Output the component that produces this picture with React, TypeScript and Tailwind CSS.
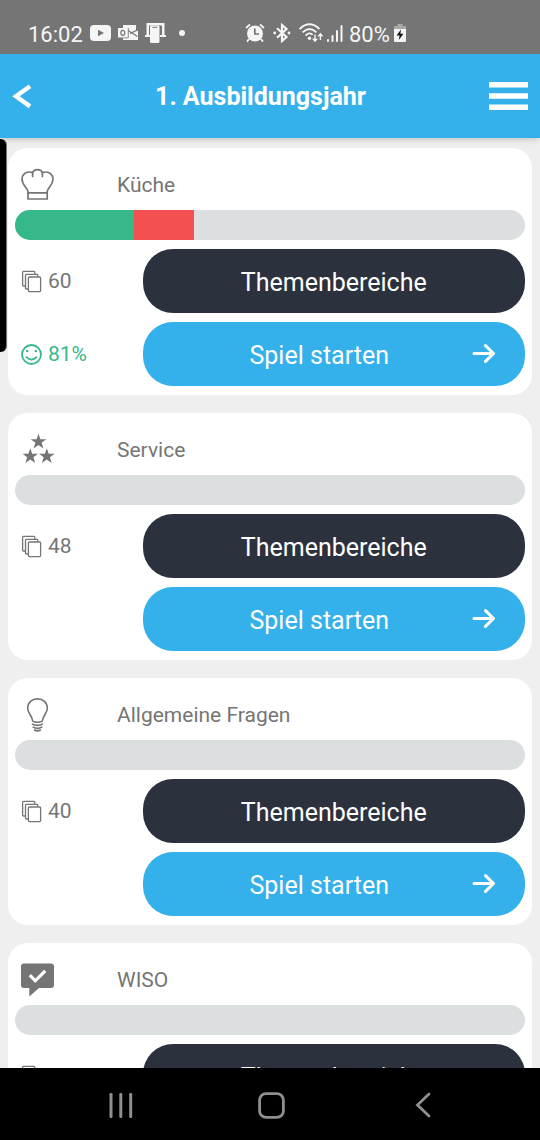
import type { ReactNode } from "react";

type Topic = {
  name: string;
  icon: ReactNode;
  cards?: number;
  right?: number;
  wrong?: number;
  score?: string;
};

const STAR = "M0 -8 L1.9 -2.5 H7.8 L3.1 1 L4.9 6.8 L0 3.3 L-4.9 6.8 L-3.1 1 L-7.8 -2.5 H-1.9 Z";

function ChefHatIcon() {
  return (
    <svg width="34" height="34" viewBox="0 0 34 34" fill="none" stroke="currentColor" strokeWidth="1.7" strokeLinejoin="round" strokeLinecap="round" aria-hidden="true">
      <path d="M7 31 V23.5 C6.4 19.4 1 17.6 1 11 C1 6.6 4.6 4 8.2 4 C9.6 4 10.6 4.2 11.6 4.8 C12.2 2.8 13.8 1.6 16.5 1.6 C19.2 1.6 20.8 2.8 21.4 4.8 C22.4 4.2 23.4 4 24.8 4 C28.6 4 32 6.6 32 11 C32 17.6 26.8 19.4 26.2 23.5 V31 Z" />
      <path d="M7 24.8 H26.2 M11.6 4.8 V8.4 M21.4 4.8 V8.4" />
    </svg>
  );
}

function StarsIcon() {
  return (
    <svg width="34" height="34" viewBox="0 0 34 34" fill="currentColor" aria-hidden="true">
      <path d={STAR} transform="translate(17.5 8.7)" />
      <path d={STAR} transform="translate(9.3 23.2)" />
      <path d={STAR} transform="translate(25.8 23.2)" />
    </svg>
  );
}

function BulbIcon() {
  return (
    <svg width="34" height="34" viewBox="0 0 34 34" fill="none" stroke="currentColor" strokeWidth="1.6" strokeLinecap="round" strokeLinejoin="round" aria-hidden="true">
      <path d="M11.5 22.3 C11 17.5 6.7 15.5 6.7 10.3 C6.7 4.5 11 .9 16.5 .9 C22 .9 26.3 4.5 26.3 10.3 C26.3 15.5 22 17.5 21.5 22.3 C21.5 23.8 20.5 24.2 16.5 24.2 C12.5 24.2 11.5 23.8 11.5 22.3 Z" />
      <path d="M11.5 26.2 C14 27.8 19 27.8 21.5 26.2 M12.2 29.1 C14.6 30.5 18.4 30.5 20.8 29.1 M13.6 32 C15.3 33 17.7 33 19.4 32" />
    </svg>
  );
}

function ChatCheckIcon() {
  return (
    <svg width="34" height="34" viewBox="0 0 34 34" aria-hidden="true">
      <path fill="currentColor" d="M3 .5 H30 Q33 .5 33 3.5 V22 Q33 25 30 25 H18 L8.3 33.5 V25 H3 Q0 25 0 22 V3.5 Q0 .5 3 .5 Z" />
      <path fill="none" stroke="#fff" strokeWidth="3.2" d="M8.8 12.2 L14.3 17.8 L24.2 7.8" />
    </svg>
  );
}

function CardsIcon() {
  return (
    <svg width="21" height="23" viewBox="0 0 21 23" fill="none" stroke="currentColor" strokeWidth="1.3" aria-hidden="true">
      <rect x="7.4" y="7" width="12.2" height="14.6" rx="1" />
      <path d="M7.2 19 H5.4 Q4.5 19 4.5 18.2 V5.2 Q4.5 4.3 5.4 4.3 H15.8 Q16.7 4.3 16.7 5.1 V6.8" />
      <path d="M4.4 16 H2.5 Q1.6 16 1.6 15.2 V2.2 Q1.6 1.3 2.5 1.3 H12.9 Q13.8 1.3 13.8 2.2 V4.1" />
    </svg>
  );
}

function SmileyIcon() {
  return (
    <svg width="21" height="21" viewBox="0 0 21 21" fill="none" stroke="currentColor" strokeWidth="1.8" aria-hidden="true">
      <circle cx="10.5" cy="10.5" r="9.5" />
      <path d="M5.4 13.2 Q10.5 18 15.6 13.2" strokeLinecap="round" />
      <circle cx="6.2" cy="7" r="1.3" fill="currentColor" stroke="none" />
      <circle cx="14.8" cy="7" r="1.3" fill="currentColor" stroke="none" />
    </svg>
  );
}

const topics: Topic[] = [
  { name: "Küche", icon: <ChefHatIcon />, cards: 60, right: 14, wrong: 7, score: "81%" },
  { name: "Service", icon: <StarsIcon />, cards: 48 },
  { name: "Allgemeine Fragen", icon: <BulbIcon />, cards: 40 },
  { name: "WISO", icon: <ChatCheckIcon /> },
];

function StatusBar() {
  return (
    <div className="flex h-[54px] shrink-0 items-center bg-[#757575] pt-3 pl-7 text-[22px] text-[#f5f5f5]">
      <div className="flex w-[217px] shrink-0 items-center gap-[7px]">
        <span className="pt-0.5">16:02</span>
        <svg width="21" height="16" viewBox="0 0 21 16" aria-hidden="true">
          <rect width="21" height="16" rx="4" fill="currentColor" />
          <path d="M8 4.8 L14 8 L8 11.2 Z" fill="#757575" />
        </svg>
        <svg width="20" height="16" viewBox="0 0 20 16" aria-hidden="true">
          <path fill="currentColor" d="M5 0 H18 V5 L12 8 L20 4.8 V15 H5 Z" />
          <path d="M10 5.5 L19.5 11.5 M12 8.5 L20 5" fill="none" stroke="#757575" strokeWidth="1.1" />
          <rect y="3" width="10" height="9.5" fill="currentColor" />
          <ellipse cx="4.8" cy="7.8" rx="2" ry="2.5" fill="none" stroke="#757575" strokeWidth="1.2" />
          <path d="M10.3 3 V12.8 H5" fill="none" stroke="#757575" strokeWidth=".8" />
        </svg>
        <svg width="21" height="20" viewBox="0 0 21 20" aria-hidden="true">
          <path fill="currentColor" d="M1.5 0 H19.5 V12 H21 V14 H15 V12 H17 V2.5 H4 V12 H5 V14 H0 V12 H1.5 Z" />
          <rect x="5" y="2.5" width="9.5" height="17.5" rx="1.5" fill="currentColor" />
          <path d="M7.3 4.3 H12.2" stroke="#757575" />
        </svg>
        <svg className="ml-1.5" width="6" height="6" viewBox="0 0 6 6" aria-hidden="true">
          <circle cx="3" cy="3" r="3" fill="currentColor" />
        </svg>
      </div>
      <div className="flex items-center">
        <svg width="20" height="20" viewBox="0 0 20 20" aria-hidden="true">
          <circle cx="10" cy="10.5" r="8" fill="currentColor" />
          <path d="M1 5 L5 1.4 M19 5 L15 1.4 M4 16 L2 18.6 M16 16 L18 18.6" stroke="currentColor" strokeWidth="1.8" />
          <path d="M9.8 5.5 V11 H14" fill="none" stroke="#757575" strokeWidth="1.7" />
        </svg>
        <svg className="ml-2" width="18" height="20" viewBox="0 0 18 20" fill="none" stroke="currentColor" strokeWidth="2.2" aria-hidden="true">
          <path d="M4 5.3 L13.5 14 L9 18 V2 L13.5 6 L4 14.7" />
          <circle cx="1.7" cy="10" r="1.4" fill="currentColor" stroke="none" />
          <circle cx="16" cy="10" r="1.4" fill="currentColor" stroke="none" />
        </svg>
        <svg className="ml-2" width="24" height="20" viewBox="0 0 24 20" fill="none" stroke="currentColor" strokeWidth="1.8" aria-hidden="true">
          <path d="M.6 6 Q10.5 -3.6 20.4 6 M3.6 9.4 Q10.5 2.6 17.4 9.4 M6.6 12.6 Q10.5 8.6 13.6 11.8" />
          <circle cx="10.5" cy="15.3" r="1.7" fill="currentColor" stroke="none" />
          <path d="M16 11.5 V18 M13.8 15.6 L16 18.2 L18.2 15.6 M21.4 17 V11 M19.2 13.4 L21.4 10.8 L23.6 13.4" strokeWidth="1.4" />
        </svg>
        <svg className="ml-1" width="16" height="17" viewBox="0 0 16 17" fill="currentColor" aria-hidden="true">
          <rect y="14" width="2" height="3" rx="1" />
          <rect x="4.5" y="10" width="2" height="7" rx="1" />
          <rect x="9" y="5" width="2" height="12" rx="1" />
          <rect x="13.5" width="2" height="17" rx="1" />
        </svg>
        <span className="ml-1.5 pt-0.5">80%</span>
        <svg className="ml-1" width="12" height="18" viewBox="0 0 12 18" aria-hidden="true">
          <path d="M3.5 0 H8.5 V2 H12 V5 H0 V2 H3.5 Z" fill="#a9a9a9" />
          <path d="M0 5 H12 V17 Q12 18 11 18 H1 Q0 18 0 17 Z" fill="currentColor" />
          <path d="M7 5.5 L2.6 11.5 H5.6 L4.8 16 L9.4 9.8 H6.4 Z" fill="#111" />
        </svg>
      </div>
    </div>
  );
}

function Header() {
  return (
    <header className="relative z-10 flex h-[84px] shrink-0 items-center bg-[#34b0ea] px-3 text-white shadow-md">
      <button type="button" aria-label="Zurück">
        <svg width="20" height="25" viewBox="0 0 20 25" fill="none" stroke="currentColor" strokeWidth="4.4" aria-hidden="true">
          <path d="M18 2.2 L4 12.3 L18 22.4" />
        </svg>
      </button>
      <h1 className="flex-1 pt-0.5 text-center text-[25px] font-bold">1. Ausbildungsjahr</h1>
      <button type="button" aria-label="Menü">
        <svg width="39" height="28" viewBox="0 0 39 28" fill="currentColor" aria-hidden="true">
          <path d="M0 0 H39 V5.6 H0 Z M0 11.2 H39 V16.8 H0 Z M0 22.4 H39 V28 H0 Z" />
        </svg>
      </button>
    </header>
  );
}

function TopicCard({ topic }: { topic: Topic }) {
  const total = topic.cards ?? 1;
  return (
    <article className="rounded-[20px] bg-white px-[7px] pb-[9px] text-[21px] text-[#757575]">
      <div className="flex h-[62px] items-center pt-3">
        <div className="w-1/5 pl-1.5">{topic.icon}</div>
        <h2 className="pt-0.5">{topic.name}</h2>
      </div>
      <div className="flex h-[30px] overflow-hidden rounded-full bg-[#dbdfe0]">
        <div className="bg-[#37b888]" style={{ width: `${((topic.right ?? 0) / total) * 100}%` }} />
        <div className="bg-[#f35151]" style={{ width: `${((topic.wrong ?? 0) / total) * 100}%` }} />
      </div>
      <div className="mt-[9px] grid grid-cols-4 gap-y-[9px]">
        <div className="flex items-center gap-1.5 pl-1.5">
          <CardsIcon />
          <span className="pt-0.5">{topic.cards}</span>
        </div>
        <button type="button" className="col-span-3 h-16 rounded-[30px] bg-[#2b323e] pt-1 text-[25px] text-white">
          Themenbereiche
        </button>
        <div className="flex items-center gap-1.5 pl-1.5 text-[#37b888]">
          {topic.score && <SmileyIcon />}
          <span className="pt-0.5">{topic.score}</span>
        </div>
        <button type="button" className="col-span-3 flex h-16 items-center rounded-[30px] bg-[#34b0ea] pr-[29px] pl-6 text-[25px] text-white">
          <span className="flex-1 pt-1">Spiel starten</span>
          <svg width="24" height="20" viewBox="0 0 24 20" fill="none" stroke="currentColor" strokeWidth="3" strokeLinecap="round" strokeLinejoin="round" aria-hidden="true">
            <path d="M2 9.5 H21.5 M13.5 1.6 L21.5 9.5 L13.5 17.4" />
          </svg>
        </button>
      </div>
    </article>
  );
}

function NavigationBar() {
  return (
    <nav className="grid h-[72px] shrink-0 grid-cols-3 bg-black pt-0.5 pr-[42px] pl-[45px] text-[#8f8f8f]">
      <button type="button" aria-label="Letzte Apps" className="flex items-center justify-center">
        <svg width="24" height="25" viewBox="0 0 24 25" fill="currentColor" aria-hidden="true">
          <rect x=".5" width="3" height="25" rx="1.2" />
          <rect x="10.3" width="3" height="25" rx="1.2" />
          <rect x="20.2" width="3" height="25" rx="1.2" />
        </svg>
      </button>
      <button type="button" aria-label="Startbildschirm" className="flex items-center justify-center">
        <svg width="27" height="27" viewBox="0 0 27 27" fill="none" stroke="currentColor" strokeWidth="2.8" aria-hidden="true">
          <rect x="1.6" y="1.6" width="23.8" height="23.8" rx="6.5" />
        </svg>
      </button>
      <button type="button" aria-label="Zurück" className="flex items-center justify-center">
        <svg width="16" height="26" viewBox="0 0 16 26" fill="none" stroke="currentColor" strokeWidth="2.8" strokeLinecap="round" aria-hidden="true">
          <path d="M14 2 L2.5 13 L14 24" />
        </svg>
      </button>
    </nav>
  );
}

export default function App() {
  return (
    <div className="flex h-screen flex-col bg-[#efefef] font-[Roboto,sans-serif]">
      <StatusBar />
      <Header />
      <div className="relative min-h-0 flex-1">
        <main className="flex h-full flex-col gap-[18px] overflow-y-auto px-2 pt-[10px] pb-[18px] [scrollbar-width:none] *:shrink-0">
          {topics.map((topic) => (
            <TopicCard key={topic.name} topic={topic} />
          ))}
        </main>
        <div className="absolute top-px left-0 z-20 h-[213px] w-[7px] rounded-r-md border-r border-[#777] bg-black" />
      </div>
      <NavigationBar />
    </div>
  );
}
